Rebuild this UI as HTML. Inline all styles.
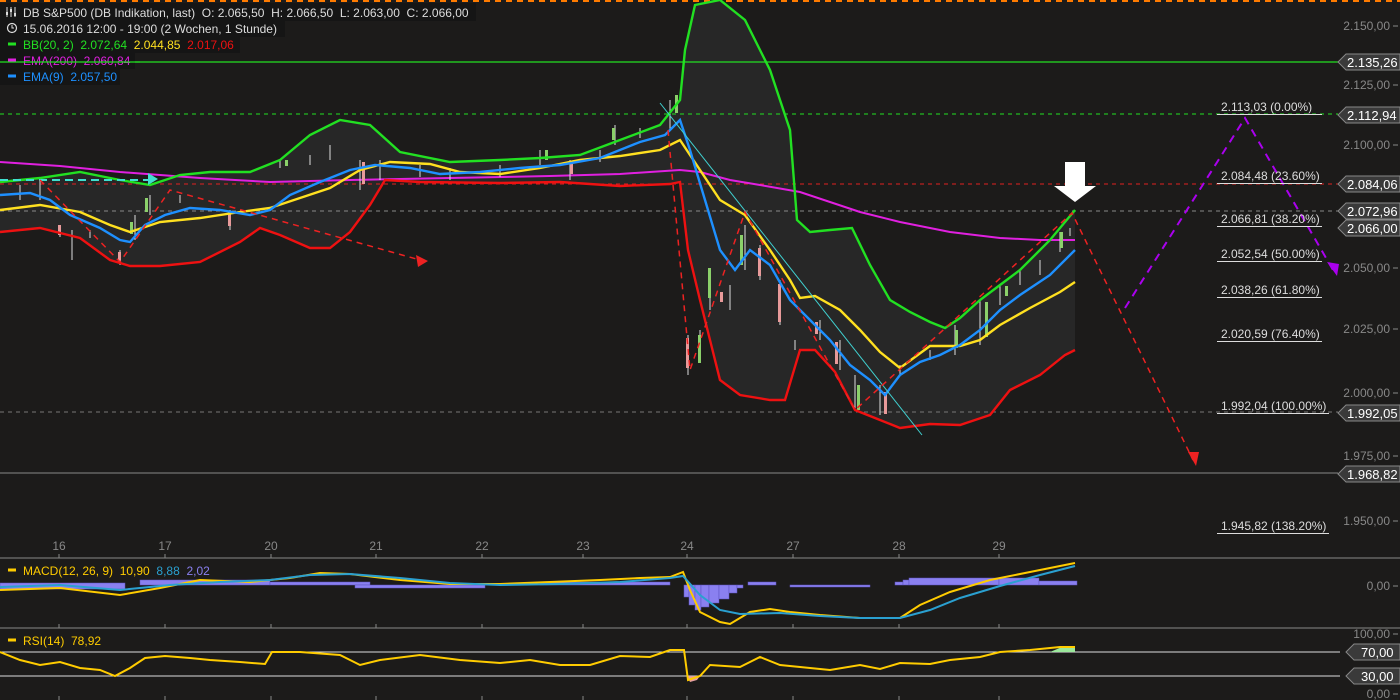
<!DOCTYPE html>
<html><head><meta charset="utf-8"><style>
html,body{margin:0;padding:0;background:#1c1b1a;}
svg{display:block;font-family:"Liberation Sans",sans-serif;}
text{white-space:pre;}
</style></head><body>
<svg width="1400" height="700" viewBox="0 0 1400 700" xmlns="http://www.w3.org/2000/svg" xml:space="preserve">
<rect width="1400" height="700" fill="#1c1b1a"/>
<line x1="0" y1="1" x2="1400" y2="1" stroke="#ff7b00" stroke-width="2" stroke-dasharray="6,5"/>
<polygon fill="#272727" points="0,182 40,178 80,172 120,180 150,185 180,175 210,172 250,172 280,160 310,135 340,120 370,125 400,152 450,162 500,160 540,158 580,155 620,140 660,125 680,100 685,50 695,5 720,0 745,20 770,70 790,130 797,220 810,232 830,230 852,228 870,265 890,300 910,312 930,322 945,328 960,318 980,300 1000,285 1020,270 1050,240 1075,210 1075,350 1065,355 1040,375 1010,390 990,415 960,425 930,424 900,428 880,420 855,410 835,372 815,350 800,350 785,400 770,400 740,395 720,380 700,300 688,250 680,182 670,184 620,186 560,182 500,183 420,182 385,180 370,205 350,232 330,248 310,248 280,235 260,228 240,242 200,262 160,266 130,266 110,260 80,238 40,228 0,232"/>
<line x1="0" y1="62" x2="1338" y2="62" stroke="#22e022" stroke-width="1.3"/>
<line x1="0" y1="114" x2="1338" y2="114" stroke="#22e022" stroke-dasharray="4,4"/>
<line x1="0" y1="184" x2="1338" y2="184" stroke="#e02020" stroke-dasharray="4,4"/>
<line x1="0" y1="211" x2="1338" y2="211" stroke="#888" stroke-dasharray="4,4"/>
<line x1="0" y1="412" x2="1338" y2="412" stroke="#777" stroke-dasharray="4,4"/>
<line x1="0" y1="473" x2="1338" y2="473" stroke="#888"/>
<polyline fill="none" stroke="#e020e0" stroke-width="2" points="0,162 60,166 120,172 200,178 270,182 350,180 450,178 550,176 620,174 680,170 700,172 730,180 760,185 800,192 860,212 900,222 950,232 1000,238 1040,240 1075,240"/>
<g stroke="#ddd" stroke-width="1">
<path d="M20,185v15M40,180v20M60,225v12M72,230v30M90,230v8M120,250v15M135,215v25M150,195v20M180,195v8M230,210v20M280,160v8M310,155v10M330,145v15M360,160v30M380,160v20M420,165v12M450,168v12M500,165v12M540,150v15M570,160v20M600,150v12M615,125v20M640,128v10M670,100v30M688,335v40M700,330v30M710,270v40M730,285v25M745,225v45M760,245v35M780,280v45M795,340v10M820,320v20M840,340v30M855,375v35M880,385v30M900,365v10M930,350v10M955,325v30M980,300v45M1000,285v20M1020,270v15M1040,260v15M1060,232v20M1070,228v8"/>
</g>
<g fill="#8bd06a">
<rect x="130" y="222" width="3" height="12"/><rect x="145" y="198" width="3" height="14"/><rect x="285" y="160" width="3" height="6"/><rect x="545" y="150" width="3" height="10"/><rect x="612" y="128" width="3" height="12"/><rect x="675" y="95" width="3" height="18"/><rect x="698" y="335" width="3" height="28"/><rect x="708" y="268" width="3" height="30"/><rect x="740" y="235" width="3" height="30"/><rect x="857" y="385" width="3" height="25"/><rect x="955" y="330" width="3" height="18"/><rect x="985" y="302" width="3" height="35"/><rect x="1005" y="286" width="3" height="10"/><rect x="1060" y="232" width="3" height="16"/></g>
<g fill="#e89a9a">
<rect x="58" y="225" width="3" height="10"/><rect x="118" y="252" width="3" height="10"/><rect x="228" y="212" width="3" height="14"/><rect x="362" y="162" width="3" height="22"/><rect x="570" y="162" width="3" height="12"/><rect x="686" y="338" width="3" height="30"/><rect x="720" y="292" width="3" height="10"/><rect x="758" y="248" width="3" height="28"/><rect x="778" y="284" width="3" height="38"/><rect x="815" y="322" width="3" height="12"/><rect x="835" y="342" width="3" height="22"/><rect x="884" y="392" width="3" height="22"/></g>
<polyline fill="none" stroke="#22e022" stroke-width="2.4" points="0,182 40,178 80,172 120,180 150,185 180,175 210,172 250,172 280,160 310,135 340,120 370,125 400,152 450,162 500,160 540,158 580,155 620,140 660,125 680,100 685,50 695,5 720,0 745,20 770,70 790,130 797,220 810,232 830,230 852,228 870,265 890,300 910,312 930,322 945,328 960,318 980,300 1000,285 1020,270 1050,240 1075,210"/>
<polyline fill="none" stroke="#ee1111" stroke-width="2.4" points="0,232 40,228 80,238 110,260 130,266 160,266 200,262 240,242 260,228 280,235 310,248 330,248 350,232 370,205 385,180 420,182 500,183 560,182 620,186 670,184 680,182 688,250 700,300 720,380 740,395 770,400 785,400 800,350 815,350 835,372 855,410 880,420 900,428 930,424 960,425 990,415 1010,390 1040,375 1065,355 1075,350"/>
<polyline fill="none" stroke="#ffe020" stroke-width="2.4" points="0,210 40,205 80,212 110,225 130,232 160,222 200,218 240,212 270,208 300,198 330,188 360,170 390,162 430,164 460,172 500,174 540,168 580,160 620,156 660,150 680,140 700,170 720,200 745,215 770,250 790,280 800,298 815,296 840,310 860,330 880,352 900,368 930,346 960,346 980,340 1000,325 1030,308 1060,292 1075,282"/>
<polyline fill="none" stroke="#1e90ff" stroke-width="2.4" points="0,195 30,193 50,200 70,215 100,228 120,240 130,242 145,225 165,215 190,208 220,210 250,215 270,210 290,195 320,182 350,170 375,165 410,168 440,174 480,172 520,168 560,165 600,158 640,142 665,135 680,120 690,150 705,200 720,250 735,270 750,250 770,265 790,300 810,320 830,340 850,365 870,380 885,395 900,375 920,362 940,355 960,345 980,330 1000,310 1020,295 1050,275 1075,250"/>
<line x1="0" y1="180" x2="150" y2="180" stroke="#40e0d0" stroke-width="2" stroke-dasharray="8,5"/>
<polygon points="148,173 158,179 148,185" fill="#40e0d0"/>
<polyline fill="none" stroke="#ee2222" stroke-width="1.5" stroke-dasharray="6,5" points="40,180 120,262 170,190 420,260"/>
<polygon points="428,261 416,255 418,267" fill="#ee2222"/>
<line x1="660" y1="103" x2="922" y2="435" stroke="#40d0d0" stroke-width="1"/>
<polyline fill="none" stroke="#ee2222" stroke-width="1.5" stroke-dasharray="6,5" points="668,130 690,370 745,212 855,410 1072,213 1193,460"/>
<polygon points="1196,466 1188,452 1199,452" fill="#ee2222"/>
<polyline fill="none" stroke="#aa00ee" stroke-width="2" stroke-dasharray="8,6" points="1125,308 1245,118 1333,270"/>
<polygon points="1337,276 1327,262 1339,264" fill="#aa00ee"/>
<polygon points="1065,162 1085,162 1085,186 1096,186 1075,202 1054,186 1065,186" fill="#fff"/>
<g font-size="12" fill="#ddd">
<text x="1221" y="111">2.113,03 (0.00%)</text>
<text x="1221" y="180">2.084,48 (23.60%)</text>
<text x="1221" y="223">2.066,81 (38.20%)</text>
<text x="1221" y="258">2.052,54 (50.00%)</text>
<text x="1221" y="294">2.038,26 (61.80%)</text>
<text x="1221" y="338">2.020,59 (76.40%)</text>
<text x="1221" y="410">1.992,04 (100.00%)</text>
<text x="1221" y="530">1.945,82 (138.20%)</text>
</g>
<g stroke="#ddd"><path d="M1217,114.5h105M1217,183.5h105M1217,226.5h105M1217,261.5h105M1217,297.5h105M1217,341.5h105M1217,413.5h112M1217,533.5h112"/></g>
<g font-size="12" fill="#888" text-anchor="end">
<text x="1390" y="30">2.150,00</text><text x="1390" y="89">2.125,00</text><text x="1390" y="149">2.100,00</text><text x="1390" y="272">2.050,00</text><text x="1390" y="333">2.025,00</text><text x="1390" y="397">2.000,00</text><text x="1390" y="460">1.975,00</text><text x="1390" y="525">1.950,00</text>
<text x="1390" y="590">0,00</text><text x="1390" y="638">100,00</text><text x="1390" y="698">0,00</text>
</g>
<g stroke="#888"><path d="M1393,26h5M1393,85h5M1393,145h5M1393,268h5M1393,329h5M1393,393h5M1393,456h5M1393,521h5M1393,586h5M1393,634h5M1393,694h5"/></g>
<g font-size="13" fill="#fff">
<g><polygon points="1338,62 1346,54 1400,54 1400,70 1346,70" fill="#3a3a3a" stroke="#888"/><text x="1347" y="67">2.135,26</text></g>
<g><polygon points="1338,115 1346,107 1400,107 1400,123 1346,123" fill="#3a3a3a" stroke="#888"/><text x="1347" y="120">2.112,94</text></g>
<g><polygon points="1338,184 1346,176 1400,176 1400,192 1346,192" fill="#3a3a3a" stroke="#888"/><text x="1347" y="189">2.084,06</text></g>
<g><polygon points="1338,211 1346,203 1400,203 1400,219 1346,219" fill="#3a3a3a" stroke="#888"/><text x="1347" y="216">2.072,96</text></g>
<g><polygon points="1338,228 1346,220 1400,220 1400,236 1346,236" fill="#3a3a3a" stroke="#888"/><text x="1347" y="233">2.066,00</text></g>
<g><polygon points="1338,413 1346,405 1400,405 1400,421 1346,421" fill="#3a3a3a" stroke="#888"/><text x="1347" y="418">1.992,05</text></g>
<g><polygon points="1338,474 1346,466 1400,466 1400,482 1346,482" fill="#3a3a3a" stroke="#888"/><text x="1347" y="479">1.968,82</text></g>
<g><polygon points="1346,652 1354,644 1400,644 1400,660 1354,660" fill="#3a3a3a" stroke="#888"/><text x="1361" y="657">70,00</text></g>
<g><polygon points="1346,676 1354,668 1400,668 1400,684 1354,684" fill="#3a3a3a" stroke="#888"/><text x="1361" y="681">30,00</text></g>
</g>
<g font-size="12" fill="#888" text-anchor="middle">
<text x="59" y="550">16</text><text x="165" y="550">17</text><text x="271" y="550">20</text><text x="376" y="550">21</text><text x="482" y="550">22</text><text x="583" y="550">23</text><text x="687" y="550">24</text><text x="793" y="550">27</text><text x="899" y="550">28</text><text x="999" y="550">29</text>
</g>
<g stroke="#888"><path d="M59,554v4M165,554v4M271,554v4M376,554v4M482,554v4M583,554v4M687,554v4M793,554v4M899,554v4M999,554v4M59,624v4M165,624v4M271,624v4M376,624v4M482,624v4M583,624v4M687,624v4M793,624v4M899,624v4M999,624v4M59,696v4M165,696v4M271,696v4M376,696v4M482,696v4M583,696v4M687,696v4M793,696v4M899,696v4M999,696v4"/></g>
<line x1="0" y1="558" x2="1400" y2="558" stroke="#888"/>
<line x1="0" y1="628" x2="1400" y2="628" stroke="#888"/>
<g fill="#8a80f0" stroke="#5a50c0" stroke-width="0.5">
<rect x="0" y="583" width="125" height="6"/><rect x="140" y="580" width="130" height="5"/><rect x="270" y="582" width="100" height="3"/><rect x="355" y="585" width="130" height="3"/><rect x="540" y="582" width="130" height="3"/>
<rect x="684" y="585" width="5" height="12"/><rect x="689" y="585" width="6" height="20"/><rect x="695" y="585" width="6" height="25"/><rect x="701" y="585" width="8" height="22"/><rect x="709" y="585" width="10" height="18"/><rect x="719" y="585" width="10" height="14"/><rect x="729" y="585" width="8" height="8"/><rect x="737" y="585" width="6" height="3"/>
<rect x="748" y="582" width="28" height="3"/><rect x="790" y="585" width="80" height="2"/>
<rect x="895" y="582" width="8" height="3"/><rect x="903" y="580" width="6" height="5"/><rect x="909" y="578" width="90" height="7"/><rect x="999" y="578" width="40" height="7"/><rect x="1039" y="581" width="38" height="4"/>
</g>
<polyline fill="none" stroke="#ffcc00" stroke-width="2" points="0,590 60,588 120,595 160,588 200,580 250,582 290,578 320,573 350,574 400,580 450,584 500,584 550,582 600,580 640,578 670,577 683,572 690,590 700,612 720,622 730,624 750,612 770,609 790,612 820,615 860,618 900,618 920,605 950,592 990,580 1030,572 1075,563"/>
<polyline fill="none" stroke="#2aa0d0" stroke-width="2" points="0,587 60,585 120,590 170,585 220,582 270,580 310,575 350,574 400,578 450,583 500,585 560,584 620,582 670,578 683,576 700,595 720,610 740,614 780,613 820,616 860,618 900,618 930,610 960,598 1000,586 1040,575 1075,566"/>
<line x1="0" y1="652" x2="1340" y2="652" stroke="#ddd"/>
<line x1="0" y1="676" x2="1340" y2="676" stroke="#ddd"/>
<polygon points="1050,652 1062,647 1075,646 1075,652" fill="#9be89b"/>
<polygon points="687,676 690,682 697,680 700,676" fill="#e8a0a0"/>
<polyline fill="none" stroke="#ffcc00" stroke-width="2" points="0,652 20,660 40,665 60,662 80,668 100,670 115,676 130,668 145,658 165,656 190,658 210,660 240,662 265,664 272,652 300,652 340,655 360,665 380,660 420,655 460,660 500,663 530,660 560,665 590,665 620,656 650,657 670,650 684,650 688,680 700,676 710,665 740,667 760,657 780,665 800,667 830,670 860,665 880,669 900,663 930,664 950,660 980,657 1000,652 1030,650 1060,647 1075,647"/>
<rect x="0" y="3" width="476" height="18" fill="#151515"/>
<rect x="0" y="20" width="285" height="17" fill="#151515"/>
<rect x="0" y="37" width="240" height="16" fill="#151515"/>
<rect x="0" y="53" width="135" height="16" fill="#151515"/>
<rect x="0" y="69" width="120" height="16" fill="#151515"/>
<g font-size="12">
<text x="23" y="17" fill="#ddd">DB S&amp;P500 (DB Indikation, last)  O: 2.065,50  H: 2.066,50  L: 2.063,00  C: 2.066,00</text>
<text x="23" y="33" fill="#ddd">15.06.2016 12:00 - 19:00 (2 Wochen, 1 Stunde)</text>
<text x="23" y="49" fill="#22e022">BB(20, 2)  2.072,64  <tspan fill="#ffe020">2.044,85</tspan>  <tspan fill="#ee1111">2.017,06</tspan></text>
<text x="23" y="65" fill="#e020e0">EMA(200)  2.060,84</text>
<text x="23" y="81" fill="#1e90ff">EMA(9)  2.057,50</text>
<text x="23" y="575" fill="#ffcc00">MACD(12, 26, 9)  10,90  <tspan fill="#2aa0d0">8,88</tspan>  <tspan fill="#8a80f0">2,02</tspan></text>
<text x="23" y="645" fill="#ffcc00">RSI(14)  78,92</text>
</g>
<line x1="0" y1="62" x2="140" y2="62" stroke="#22e022" stroke-width="1.3"/>
<g stroke-width="3"><path d="M8,44h8" stroke="#22e022"/><path d="M8,60h8" stroke="#e020e0"/><path d="M8,76h8" stroke="#1e90ff"/><path d="M8,570h8" stroke="#ffcc00"/><path d="M8,640h8" stroke="#ffcc00"/></g>
<circle cx="12" cy="28" r="4.5" fill="none" stroke="#ddd" stroke-width="1.2"/><path d="M12,25v3h2" stroke="#ddd" fill="none"/>
<path d="M7,7v10M11,7v10M15,7v10" stroke="#ddd"/><rect x="6" y="12" width="2" height="3" fill="#ddd"/><rect x="10" y="9" width="2" height="3" fill="#ddd"/><rect x="14" y="13" width="2" height="3" fill="#ddd"/>
</svg>
</body></html>
